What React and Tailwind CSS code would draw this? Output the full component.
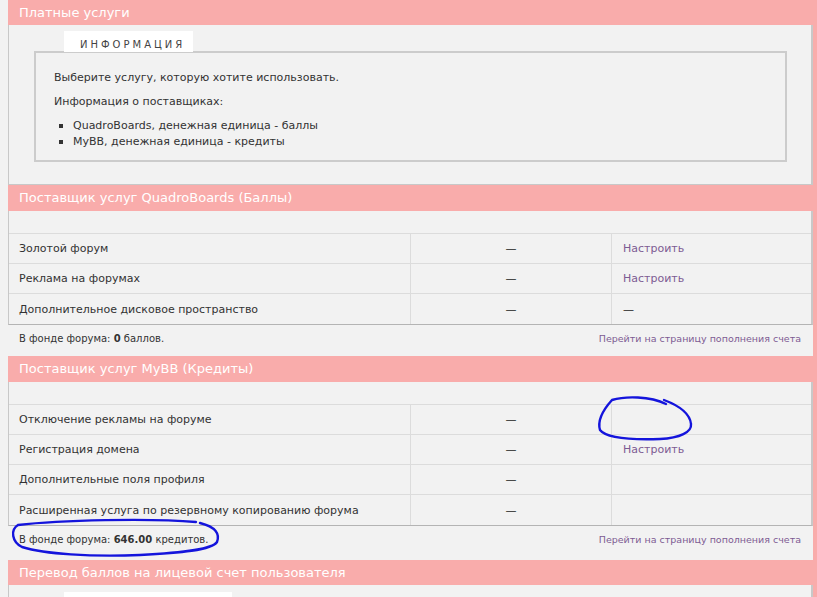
const font = { fontFamily: '"DejaVu Sans", Verdana, sans-serif' }

const Header = ({ children, h = 'h-[26px] leading-[26px]' }) => (
  <div className={'pl-[11px] text-[13px] text-white bg-[#f9acab] ' + h}>{children}</div>
)

const Dash = () => <span className="text-[#222]">—</span>

const Link = ({ children, className = '' }) => <span className={'text-[#7d5b93] ' + className}>{children}</span>

const ServiceTable = ({ rows }) => (
  <div className="mr-[4px] bg-[#f2f2f2] border-l border-r-2 border-b border-l-[#c8c8c8] border-r-[#c8c8c8] border-b-[#b4b4b4]">
    <div className="h-[23px] border-b border-[#dcdcdc]" />
    {rows.map((r, i) => (
      <div
        key={r[0]}
        className={
          'grid grid-cols-[401px_201px_1fr] h-[30px] items-center text-[11px] text-[#333] ' +
          (i < rows.length - 1 ? 'border-b border-[#dcdcdc]' : '')
        }
      >
        <div className="pl-[10px] pt-[2px] h-full flex items-center">{r[0]}</div>
        <div className="h-full pt-[2px] flex items-center justify-center border-l border-[#dcdcdc]">
          <Dash />
        </div>
        <div className="h-full pt-[2px] flex items-center pl-[11px] border-l border-[#dcdcdc]">
          {r[1] === 'link' ? <Link>Настроить</Link> : r[1] === 'dash' ? <Dash /> : null}
        </div>
      </div>
    ))}
  </div>
)

const Fund = ({ amount, unit, h }) => (
  <div className={'mr-[4px] bg-[#f2f2f2] flex justify-between items-baseline pl-[11px] pr-[12px] pt-[6px] text-[10px] text-[#333] ' + h}>
    <span>
      В фонде форума: <b>{amount}</b> {unit}.
    </span>
    <Link className="text-[9.5px]">Перейти на страницу пополнения счета</Link>
  </div>
)

export default function App() {
  return (
    <div className="relative flex min-h-screen h-[597px] overflow-hidden bg-[#f2f2f2]" style={font}>
      <div className="w-[8px] shrink-0" />
      <div className="flex-1 bg-[#f9acab]">
        <Header h="h-[25px] leading-[25px]">Платные услуги</Header>
        <div className="mr-[4px] h-[160px] bg-[#f2f2f2] border-l border-r-2 border-b border-[#c8c8c8] pt-[6px] pl-[25px] pr-[24px]">
          <div className="relative z-10 ml-[30px] w-[129px] h-[21px] -mb-px bg-white text-[10px] tracking-[3px] text-[#444] pl-[16px] pt-[6px]">
            ИНФОРМАЦИЯ
          </div>
          <div className="h-[111px] border-2 border-[#cccccc] pl-[18px] pt-[17px] text-[11px] text-[#333]">
            <p>Выберите услугу, которую хотите использовать.</p>
            <p className="mt-[7px]">Информация о поставщиках:</p>
            <ul className="mt-[8px] pl-[5px]">
              {['QuadroBoards, денежная единица - баллы', 'MyBB, денежная единица - кредиты'].map((t) => (
                <li key={t} className="flex items-center h-[16px]">
                  <span className="w-[4px] h-[4px] bg-[#333] mr-[10px]" />
                  {t}
                </li>
              ))}
            </ul>
          </div>
        </div>

        <Header>Поставщик услуг QuadroBoards (Баллы)</Header>
        <ServiceTable
          rows={[
            ['Золотой форум', 'link'],
            ['Реклама на форумах', 'link'],
            ['Дополнительное дисковое пространство', 'dash'],
          ]}
        />
        <Fund amount="0" unit="баллов" h="h-[31px]" />

        <Header>Поставщик услуг MyBB (Кредиты)</Header>
        <ServiceTable
          rows={[
            ['Отключение рекламы на форуме', null],
            ['Регистрация домена', 'link'],
            ['Дополнительные поля профиля', null],
            ['Расширенная услуга по резервному копированию форума', null],
          ]}
        />
        <Fund amount="646.00" unit="кредитов" h="h-[34px]" />

        <Header h="h-[25px] leading-[25px]">Перевод баллов на лицевой счет пользователя</Header>
        <div className="mr-[4px] h-[40px] bg-[#f2f2f2] border-l border-r-2 border-[#c8c8c8] pt-[7px] pl-[25px]">
          <div className="ml-[30px] w-[168px] h-[21px] bg-white" />
        </div>
      </div>

      <svg className="absolute inset-0 pointer-events-none" width="817" height="597" viewBox="0 0 817 597">
        <path
          d="M666 404 C650 396 625 396 612 400 C603 410 597 420 600 430 C606 438 630 440 660 439 C680 438 692 432 691 424 C690 414 680 406 664 400"
          fill="none"
          stroke="#1414dc"
          strokeWidth="2.4"
          strokeLinecap="round"
        />
        <path
          d="M196 522 C150 518 60 520 18 525 C10 530 12 542 22 547 C45 554 90 557 140 555 C180 553 212 550 217 542 C220 534 216 527 200 523"
          fill="none"
          stroke="#1414dc"
          strokeWidth="2.4"
          strokeLinecap="round"
        />
      </svg>
    </div>
  )
}
